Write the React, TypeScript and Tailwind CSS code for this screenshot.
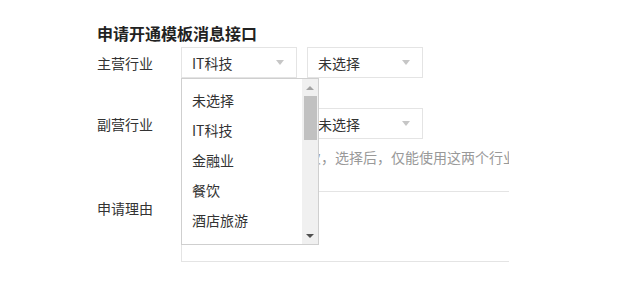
const font = { fontFamily: '"Noto Sans CJK SC", "Liberation Sans", sans-serif' }

const industries = ['未选择', 'IT科技', '金融业', '餐饮', '酒店旅游']

function Select({ value }: { value: string }) {
  return (
    <div className="w-[116px] h-[31px] border border-[#e4e4e4] flex items-center justify-between pl-[10px] pr-[12px] text-[14px] text-[#333]">
      <span>{value}</span>
      <span className="w-0 h-0 border-x-[4px] border-x-transparent border-t-[5px] border-t-[#c6c6c6]" />
    </div>
  )
}

export default function App() {
  return (
    <div className="relative w-[619px] h-[293px] bg-white" style={font}>
      <div className="w-[509px] overflow-hidden pl-[97px] pt-[23px] leading-[20px]">
        <h2 className="text-[16px] font-bold text-[#222] leading-[20px]">申请开通模板消息接口</h2>

        <div className="mt-[4px] flex items-center">
          <div className="w-[84px] text-[14px] text-[#333]">主营行业</div>
          <div className="flex gap-[10px]">
            <Select value="IT科技" />
            <Select value="未选择" />
          </div>
        </div>

        <div className="mt-[30px] flex items-center">
          <div className="w-[84px] text-[14px] text-[#333]">副营行业</div>
          <div className="flex gap-[10px]">
            <Select value="未选择" />
            <Select value="未选择" />
          </div>
        </div>

        <p className="mt-[8px] ml-[84px] text-[14px] text-[#999] whitespace-nowrap">
          每月仅可修改行业一次，选择后，仅能使用这两个行业下的模板
        </p>

        <div className="mt-[24px] flex">
          <div className="w-[84px] pt-[7px] text-[14px] text-[#333] shrink-0">申请理由</div>
          <div className="w-[420px] h-[71px] shrink-0 border border-[#e4e4e4]" />
        </div>
        <div className="h-[31px]" />
      </div>

      {/* open dropdown of 主营行业 */}
      <div className="absolute left-[181px] top-[78px] w-[138px] h-[167px] border border-[#cfcfcf] bg-white flex">
        <ul className="flex-1 pt-[6px] pl-[10px] text-[14px] text-[#333]">
          {industries.map((item) => (
            <li key={item} className="h-[30px] leading-[30px]">{item}</li>
          ))}
        </ul>
        <div className="w-[16px] h-full bg-[#f0f0f0] flex flex-col items-center">
          <div className="h-[17px] flex items-center justify-center">
            <span className="w-0 h-0 border-x-[4px] border-x-transparent border-b-[4px] border-b-[#a3a3a3]" />
          </div>
          <div className="w-[13px] h-[44px] bg-[#c1c1c1]" />
          <div className="flex-1" />
          <div className="h-[17px] flex items-center justify-center">
            <span className="w-0 h-0 border-x-[4px] border-x-transparent border-t-[4px] border-t-[#505050]" />
          </div>
        </div>
      </div>
    </div>
  )
}
